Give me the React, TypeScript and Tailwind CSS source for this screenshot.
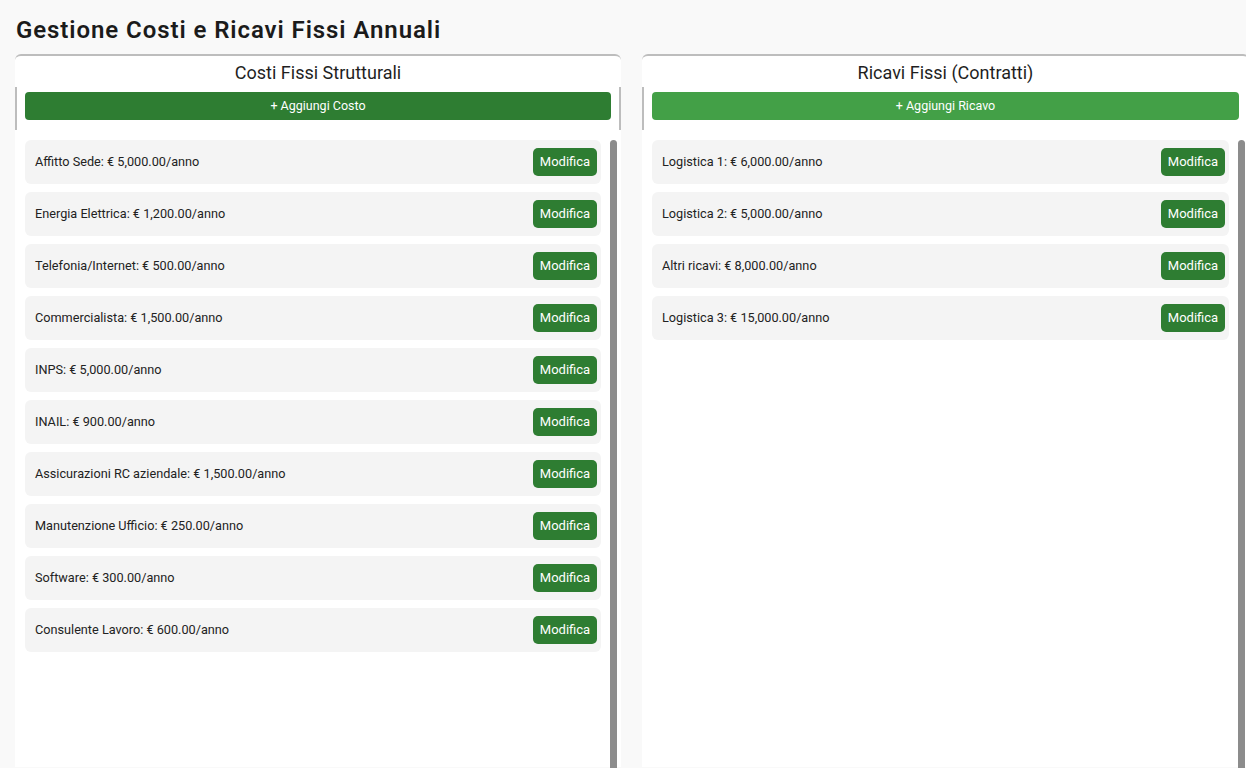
import React from "react";

const costi = [
  "Affitto Sede: € 5,000.00/anno",
  "Energia Elettrica: € 1,200.00/anno",
  "Telefonia/Internet: € 500.00/anno",
  "Commercialista: € 1,500.00/anno",
  "INPS: € 5,000.00/anno",
  "INAIL: € 900.00/anno",
  "Assicurazioni RC aziendale: € 1,500.00/anno",
  "Manutenzione Ufficio: € 250.00/anno",
  "Software: € 300.00/anno",
  "Consulente Lavoro: € 600.00/anno",
];

const ricavi = [
  "Logistica 1: € 6,000.00/anno",
  "Logistica 2: € 5,000.00/anno",
  "Altri ricavi: € 8,000.00/anno",
  "Logistica 3: € 15,000.00/anno",
];

function Panel({
  title,
  addLabel,
  addClass,
  items,
  wide,
}: {
  title: string;
  addLabel: string;
  addClass: string;
  items: string[];
  wide?: boolean;
}) {
  return (
    <div
      className={`${wide ? "w-[607px]" : "w-[606px]"} shrink-0 h-[713px] bg-white border-t-2 border-[#bdbdbd] rounded-t-[6px] flex flex-col`}
    >
      <div className="h-[31px] flex items-center justify-center text-[18px] text-[#1f1f1f] leading-none pt-[2px]">
        {title}
      </div>
      <div className="border-x-2 border-[#bdbdbd] px-[8px] pt-[5px] pb-[10px]">
        <button
          className={`w-full h-[28px] rounded-[4px] text-white text-[12.5px] flex items-center justify-center ${addClass}`}
        >
          {addLabel}
        </button>
      </div>
      <div className="flex flex-1 pl-[10px] pt-[10px] min-h-0">
        <div
          className={`${wide ? "w-[577px]" : "w-[576px]"} flex flex-col gap-[8px]`}
        >
          {items.map((t) => (
            <div
              key={t}
              className="h-[44px] bg-[#f4f4f4] rounded-[6px] flex items-center justify-between pl-[10px] pr-[4px]"
            >
              <span className="text-[12.7px] text-[#222]">{t}</span>
              <button className="h-[28px] w-[64px] bg-[#2e7d32] text-white text-[13px] rounded-[5px] flex items-center justify-center">
                Modifica
              </button>
            </div>
          ))}
        </div>
        <div className="ml-[9px] w-[7px] bg-[#8c8c8c] rounded-t-[4px] h-[700px]" />
      </div>
    </div>
  );
}

export default function App() {
  return (
    <div
      className="w-[1246px] h-[768px] overflow-hidden bg-[#f9f9f9] pl-[15px]"
      style={{ fontFamily: "Roboto, 'Liberation Sans', sans-serif" }}
    >
      <h1 className="text-[24px] font-semibold text-[#1b1b1b] pt-[14px] pl-[1px] leading-[32px] h-[54px] tracking-[0.92px]">
        Gestione Costi e Ricavi Fissi Annuali
      </h1>
      <div className="flex gap-[21px]">
        <Panel
          title="Costi Fissi Strutturali"
          addLabel="+ Aggiungi Costo"
          addClass="bg-[#2e7d32]"
          items={costi}
        />
        <Panel
          title="Ricavi Fissi (Contratti)"
          addLabel="+ Aggiungi Ricavo"
          addClass="bg-[#43a047]"
          items={ricavi}
          wide
        />
      </div>
    </div>
  );
}
